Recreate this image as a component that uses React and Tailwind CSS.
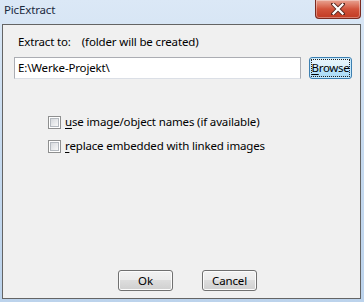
import React from 'react';

const font = { fontFamily: '"Noto Sans", "Open Sans", sans-serif' };

function CloseButton() {
  return (
    <div className="w-[46px] h-[19px] rounded-b-[4px] border border-t-0 border-[#7a2a20] bg-gradient-to-b from-[#e8a493] via-[#d2533b] to-[#c13a22] flex items-center justify-center shadow-[inset_0_0_0_1px_rgba(255,255,255,0.35)]">
      <svg width="14" height="12" viewBox="0 0 14 12">
        <path d="M2 1 L12 11 M12 1 L2 11" stroke="#5a2a22" strokeWidth="4" strokeLinecap="square" />
        <path d="M2.5 1.5 L11.5 10.5 M11.5 1.5 L2.5 10.5" stroke="#ffffff" strokeWidth="2.2" strokeLinecap="square" />
      </svg>
    </div>
  );
}

function Checkbox({ hot, rest }) {
  return (
    <label className="flex items-center gap-[4px] h-[16px]">
      <span className="w-[13px] h-[13px] border border-[#8e8f8f] bg-white flex items-center justify-center">
        <span className="w-[9px] h-[9px] border border-[#b4b9bf] bg-gradient-to-br from-[#d6d9dd] to-[#f8f8f8]" />
      </span>
      <span className="text-[11.5px] tracking-[-0.15px] leading-[16px] text-black">
        <span className="underline underline-offset-2">{hot}</span>
        {rest}
      </span>
    </label>
  );
}

function WinButton({ children }) {
  return (
    <button className="w-[55px] h-[21px] rounded-[3px] border border-[#707070] bg-[linear-gradient(#f2f2f2_0%,#ebebeb_50%,#dddddd_50%,#cfcfcf_100%)] text-[11.5px] tracking-[-0.15px] leading-[16px] text-black shadow-[inset_0_0_0_1px_#fcfcfc]">
      {children}
    </button>
  );
}

export default function App() {
  return (
    <div
      className="w-[364px] h-[302px] flex flex-col bg-gradient-to-b from-[#dbe8f6] via-[#c6daef] to-[#bcd3ec] overflow-hidden"
      style={font}
    >
      {/* Title bar */}
      <div className="h-[24px] flex items-start justify-between">
        <span className="pl-[4px] pt-[2px] text-[11.5px] tracking-[-0.15px] leading-[16px] text-[#1b2a3e]">PicExtract</span>
        <div className="pr-[3px]">
          <CloseButton />
        </div>
      </div>

      {/* Client area */}
      <div className="flex-1 ml-[2px] mr-[3px] mb-[3px] border border-[#646464] bg-[#f0f0f0] flex flex-col">
        <div className="pl-[15px] pt-[9px] flex gap-[11px] text-[11.5px] tracking-[-0.15px] leading-[16px] text-black">
          <span>Extract to:</span>
          <span>(folder will be created)</span>
        </div>

        <div className="pl-[11px] pt-[7px] flex items-start gap-[8px]">
          <div className="w-[287px] h-[22px] border border-[#abadb3] border-b-[#dbdfe6] bg-white flex items-center pl-[3px] text-[11.5px] tracking-[-0.15px] text-black">
            E:\Werke-Projekt\
          </div>
          <button className="w-[43px] h-[22px] rounded-[3px] border border-[#3c7fb1] bg-[linear-gradient(#eaf6fd_0%,#d9f0fc_50%,#bee6fd_50%,#a7d9f5_100%)] p-[2px] shadow-[inset_0_0_0_1px_#c6e9fc]">
            <span className="flex w-full h-full items-center justify-center outline-1 outline-dotted outline-[#222] text-[11.5px] tracking-[-0.3px] leading-[14px] text-black">
              <span className="underline underline-offset-2">B</span>rowse
            </span>
          </button>
        </div>

        <div className="pl-[45px] pt-[35px] flex flex-col gap-[8px]">
          <Checkbox hot="u" rest="se image/object names (if available)" />
          <Checkbox hot="r" rest="eplace embedded with linked images" />
        </div>

        <div className="flex-1" />

        <div className="pl-[115px] pb-[7px] flex gap-[29px]">
          <WinButton>Ok</WinButton>
          <WinButton>Cancel</WinButton>
        </div>
      </div>
    </div>
  );
}
